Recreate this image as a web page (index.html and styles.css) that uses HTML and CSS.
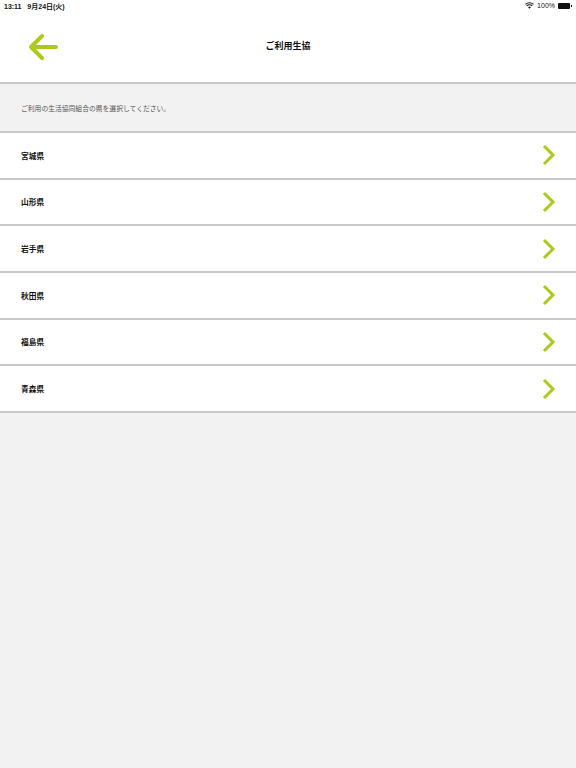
FILE: index.html
```html
<!DOCTYPE html>
<html lang="ja">
<head>
  <meta charset="UTF-8" />
  <meta name="viewport" content="width=device-width, initial-scale=1.0"/>
  <title>ご利用生協</title>
  <link rel="stylesheet" href="styles.css">
</head>
<body>
  <header class="top">
    <div class="status-bar">
      <span class="clock">13:11&nbsp;&nbsp;&nbsp;9月24日(火)</span>
      <span class="status-right">
        <svg class="wifi" width="9" height="7" viewBox="0 0 18 14">
          <path d="M9 13.5 L6.2 10.4 A4 4 0 0 1 11.8 10.4 Z" fill="#111"/>
          <path d="M3.6 7.7 A7.6 7.6 0 0 1 14.4 7.7" stroke="#111" stroke-width="2.2" fill="none"/>
          <path d="M1 4.8 A11.5 11.5 0 0 1 17 4.8" stroke="#111" stroke-width="2.2" fill="none"/>
        </svg>
        <span class="battery-text">100%</span>
        <span class="battery"></span>
      </span>
    </div>
    <nav class="nav-bar">
      <a class="back" href="#">
        <svg width="32" height="28" viewBox="0 0 32 28">
          <path d="M29 14 H5 M15 3 L4 14 L15 25" stroke="#afc91a" stroke-width="4" stroke-linecap="round" stroke-linejoin="round" fill="none"/>
        </svg>
      </a>
      <h1 class="title">ご利用生協</h1>
    </nav>
  </header>

  <p class="notice">ご利用の生活協同組合の県を選択してください。</p>

  <ul class="pref-list">
    <li><span>宮城県</span><svg class="chev" width="14" height="22" viewBox="0 0 14 22"><path d="M2 2 L11 11 L2 20" stroke="#afc91a" stroke-width="3" fill="none"/></svg></li>
    <li><span>山形県</span><svg class="chev" width="14" height="22" viewBox="0 0 14 22"><path d="M2 2 L11 11 L2 20" stroke="#afc91a" stroke-width="3" fill="none"/></svg></li>
    <li><span>岩手県</span><svg class="chev" width="14" height="22" viewBox="0 0 14 22"><path d="M2 2 L11 11 L2 20" stroke="#afc91a" stroke-width="3" fill="none"/></svg></li>
    <li><span>秋田県</span><svg class="chev" width="14" height="22" viewBox="0 0 14 22"><path d="M2 2 L11 11 L2 20" stroke="#afc91a" stroke-width="3" fill="none"/></svg></li>
    <li><span>福島県</span><svg class="chev" width="14" height="22" viewBox="0 0 14 22"><path d="M2 2 L11 11 L2 20" stroke="#afc91a" stroke-width="3" fill="none"/></svg></li>
    <li><span>青森県</span><svg class="chev" width="14" height="22" viewBox="0 0 14 22"><path d="M2 2 L11 11 L2 20" stroke="#afc91a" stroke-width="3" fill="none"/></svg></li>
  </ul>
</body>
</html>
```

FILE: styles.css
```css
:root {
  --accent: #afc91a;
  --bg-color: #f2f2f2;
  --line: #c9c9c9;
  --text-color: #111;
}

body {
  margin: 0;
  padding: 0;
  background-color: var(--bg-color);
  color: var(--text-color);
  font-family: "Noto Sans CJK JP", "Noto Sans", sans-serif;
}

.top {
  background: #fff;
  height: 82px;
  border-bottom: 2px solid var(--line);
}

.status-bar {
  height: 11px;
  display: flex;
  justify-content: space-between;
  align-items: center;
  padding: 0 4px;
  font-family: "Liberation Sans", "Noto Sans CJK JP", sans-serif;
  font-size: 7px;
  font-weight: bold;
}

.status-right {
  display: flex;
  align-items: center;
  gap: 3px;
  font-weight: normal;
}

.battery {
  width: 12px;
  height: 6px;
  background: #111;
  border-radius: 1px;
  position: relative;
  margin-right: 2px;
}

.battery::after {
  content: "";
  position: absolute;
  right: -2px;
  top: 2px;
  width: 1px;
  height: 2px;
  background: #111;
}

.nav-bar {
  height: 71px;
  display: flex;
  align-items: center;
  justify-content: center;
  position: relative;
}

.back {
  position: absolute;
  left: 27px;
  top: 22px;
  display: flex;
}

.title {
  margin: 0;
  font-size: 9px;
  font-weight: bold;
  margin-top: -2px;
}

.notice {
  margin: 0;
  height: 47px;
  display: flex;
  align-items: center;
  padding-left: 21px;
  font-size: 6.8px;
  color: #555;
  border-bottom: 2px solid var(--line);
}

.pref-list {
  list-style: none;
  margin: 0;
  padding: 0;
}

.pref-list li {
  background: #fff;
  height: 44.67px;
  border-bottom: 2px solid var(--line);
  display: flex;
  align-items: center;
  justify-content: space-between;
  padding: 0 20px 0 21px;
  font-size: 7.7px;
  font-weight: bold;
}
```
